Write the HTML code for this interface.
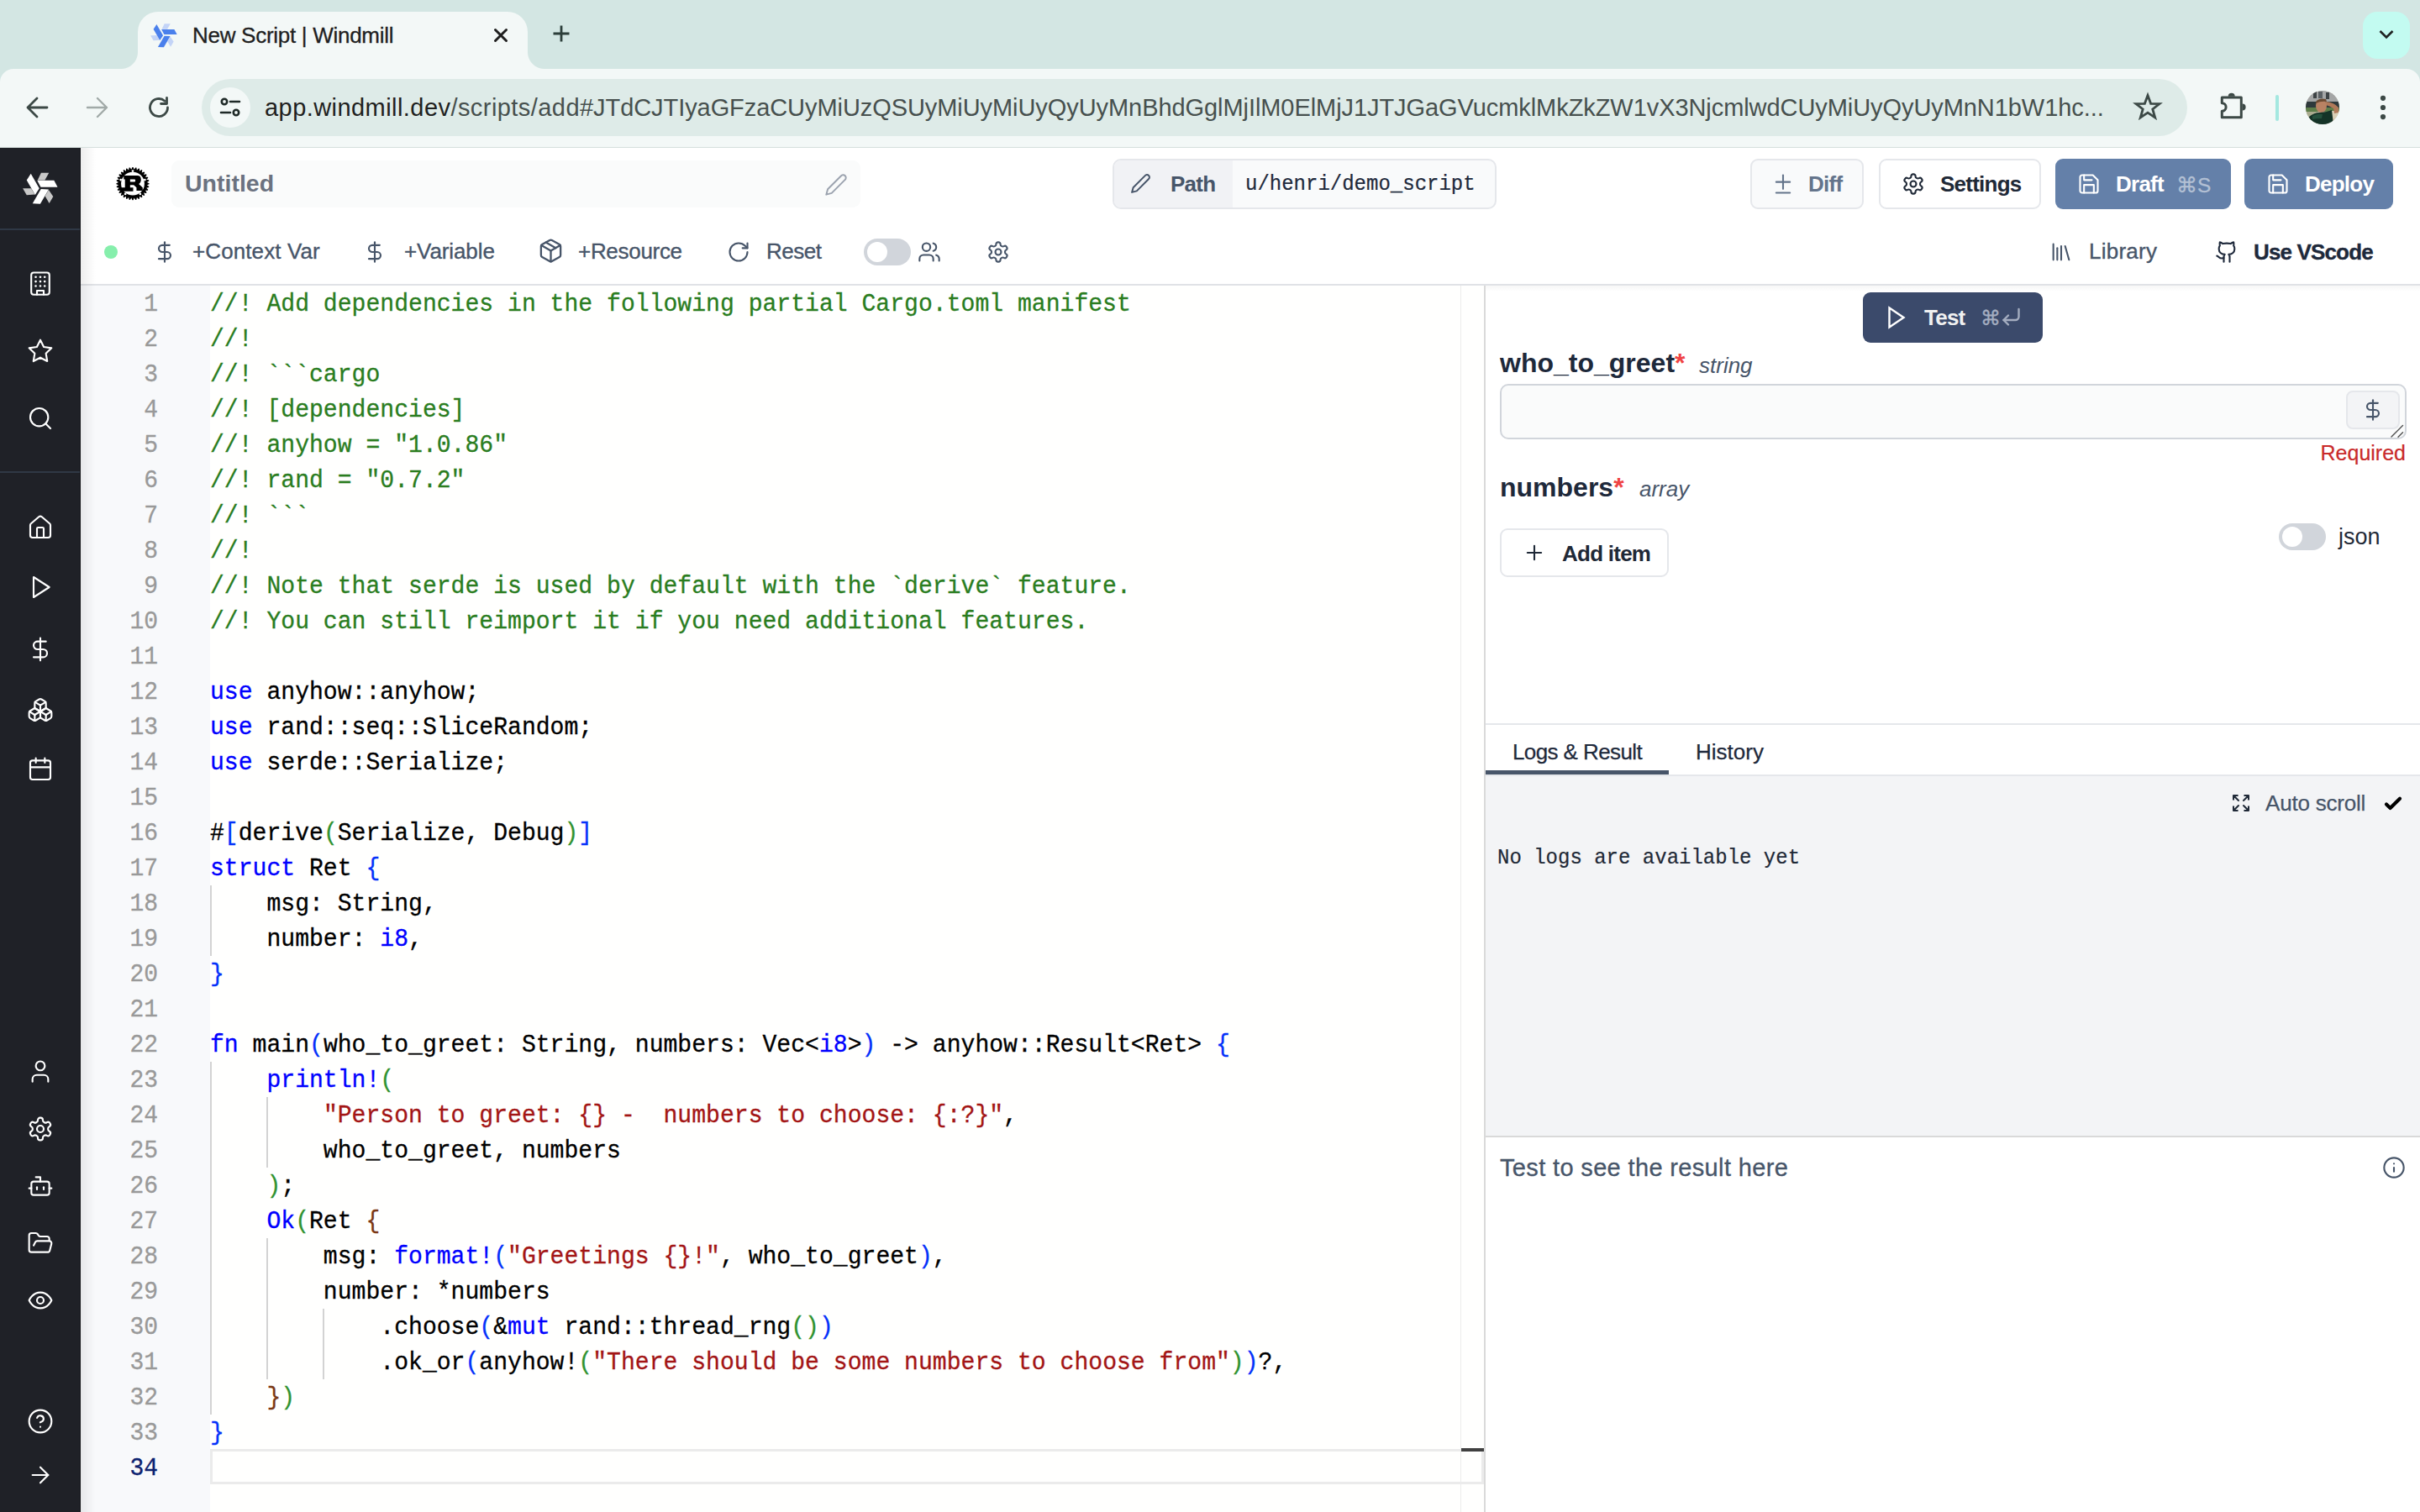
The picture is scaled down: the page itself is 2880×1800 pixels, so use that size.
<!DOCTYPE html>
<html><head><meta charset="utf-8">
<style>
*{box-sizing:border-box;margin:0;padding:0}
html,body{width:2880px;height:1800px;overflow:hidden;background:#fff;font-family:"Liberation Sans",sans-serif}
.a{position:absolute}
svg{display:block;overflow:visible}
.ic{fill:none;stroke:currentColor;stroke-width:2;stroke-linecap:round;stroke-linejoin:round}
.mono{font-family:"Liberation Mono",monospace}
/* chrome */
#tabstrip{left:0;top:0;width:2880px;height:130px;background:#d3e6e3}
#tab{left:164px;top:14px;width:464px;height:70px;background:#f3f8f7;border-radius:24px 24px 0 0}
#tabfl{left:144px;top:62px;width:20px;height:20px;background:radial-gradient(circle at 0 0,#d3e6e3 19.5px,#f3f8f7 20.5px)}
#tabfr{left:628px;top:62px;width:20px;height:20px;background:radial-gradient(circle at 100% 0,#d3e6e3 19.5px,#f3f8f7 20.5px)}
#toolbar{left:0;top:82px;width:2880px;height:93px;background:#f3f8f7;border-radius:16px 16px 0 0}
#tbline{left:0;top:175px;width:2880px;height:1px;background:#d5dfdd}
#omni{left:240px;top:94px;width:2363px;height:68px;background:#deebe8;border-radius:34px}
#siteinfo{left:250px;top:104px;width:48px;height:48px;border-radius:24px;background:#f3f8f7}
#url{left:315px;top:112px;font-size:29px;color:#47504e;white-space:nowrap;letter-spacing:-0.07px}
#url i{font-style:normal;letter-spacing:0.44px}
#url b{font-weight:normal;color:#1f2120}
#tabtitle{left:229px;top:27px;font-size:26px;letter-spacing:-0.28px;-webkit-text-stroke:0.3px #1f1f1f;color:#1f1f1f;white-space:nowrap}
#ddbtn{left:2812px;top:14px;width:56px;height:56px;border-radius:17px;background:#c3fbf1}
/* app */
#side{left:0;top:176px;width:96px;height:1624px;background:#1f2127}
.sdiv{left:0;width:96px;height:2px;background:#2f3845}
.sic{left:33px;width:30px;height:30px;color:#fff}

/* header */
.btn{position:absolute;border-radius:9px;display:flex;align-items:center;white-space:nowrap}
.tb{position:absolute;display:flex;align-items:center;color:#475569;font-size:26px;letter-spacing:-0.3px;-webkit-text-stroke:0.35px currentColor;white-space:nowrap}
#editor{left:96px;top:340px;width:1671px;height:1460px;background:#fffffe}
#gutter{left:96px;top:340px;width:154px;height:1460px;background:#f8f9fb}
.ln{position:absolute;left:96px;width:92px;text-align:right;font-family:"Liberation Mono",monospace;font-size:28px;color:#999;line-height:42px;height:42px;transform:scaleY(1.055);transform-origin:0 28.5px;-webkit-text-stroke:0.3px currentColor}
.cl{position:absolute;left:250px;font-family:"Liberation Mono",monospace;font-size:28.1px;color:#000;line-height:42px;height:42px;white-space:pre;transform:scaleY(1.055);transform-origin:0 28.5px;-webkit-text-stroke:0.3px currentColor}
.cl span{-webkit-text-stroke:0.3px currentColor}
.cm{color:#2a7d1f}.kw{color:#0000ff}.st{color:#a31515}.b1{color:#0431fa}.b2{color:#319331}.b3{color:#7b3814}
.ln.act{color:#0b216f}
.ig{position:absolute;width:2px;background:#d3d3d3}
</style></head><body>
<div id="tabstrip" class="a"></div>
<div id="toolbar" class="a"></div>
<div id="tab" class="a"></div>
<div id="tabfl" class="a"></div>
<div id="tabfr" class="a"></div>
<div id="omni" class="a"></div>
<div id="siteinfo" class="a"></div>
<div id="tbline" class="a"></div>

<!-- favicon -->
<svg class="a" style="left:179px;top:26px;width:32px;height:32px" viewBox="-450 -450 900 900">
 <g id="wm">
  <polygon points="-70,-205 20,-390 220,-390 115,-205" fill="#c3d4f7"/>
  <polygon points="-80,-200 350,-200 440,-25 10,-25" fill="#4a80ec"/>
 </g>
 <use href="#wm" transform="rotate(120)"/>
 <use href="#wm" transform="rotate(240)"/>
</svg>
<div id="tabtitle" class="a">New Script | Windmill</div>
<svg class="a ic" style="left:588px;top:34px;width:16px;height:16px;color:#1f1f1f;stroke-width:3" viewBox="0 0 16 16"><path d="M1.5 1.5L14.5 14.5M14.5 1.5L1.5 14.5"/></svg>
<svg class="a" style="left:657px;top:29px;width:22px;height:22px" viewBox="0 0 22 22"><path d="M11 1.5v19M1.5 11h19" stroke="#2c3e3a" stroke-width="2.8"/></svg>
<div id="ddbtn" class="a"></div>
<svg class="a" style="left:2830px;top:34px;width:20px;height:14px" viewBox="0 0 20 14"><path d="M2.5 3l7.5 7.5L17.5 3" fill="none" stroke="#1f2322" stroke-width="2.6"/></svg>

<!-- toolbar icons -->
<svg class="a ic" style="left:30px;top:114px;width:28px;height:28px;color:#3c4946;stroke-width:2.8" viewBox="0 0 28 28"><path d="M26 14H3M14 3L3 14l11 11"/></svg>
<svg class="a ic" style="left:102px;top:114px;width:28px;height:28px;color:#a1aaa8;stroke-width:2.4" viewBox="0 0 28 28"><path d="M2 14h23M14 3l11 11-11 11"/></svg>
<svg class="a ic" style="left:175px;top:114px;width:28px;height:28px;color:#3c4946;stroke-width:2.8" viewBox="0 0 28 28"><path d="M24.5 14A10.5 10.5 0 1 1 21 6.2"/><path d="M23.5 2.5v7h-7" /></svg>
<svg class="a ic" style="left:261px;top:115px;width:26px;height:26px;color:#1f2a28;stroke-width:2.6" viewBox="0 0 26 26"><circle cx="6" cy="6" r="3.2"/><path d="M13 6h11M2 19h11"/><circle cx="20" cy="19" r="3.2"/></svg>
<div id="url" class="a"><i><b>app.windmill.dev</b>/scripts/add</i>#JTdCJTIyaGFzaCUyMiUzQSUyMiUyMiUyQyUyMnBhdGglMjIlM0ElMjJ1JTJGaGVucmklMkZkZW1vX3NjcmlwdCUyMiUyQyUyMnN1bW1hc...</div>
<svg class="a" style="left:2539px;top:110px;width:34px;height:33px" viewBox="0 0 34 33"><polygon points="17,3.5 20.6,13.3 31,13.6 22.8,20 25.7,30 17,24.2 8.3,30 11.2,20 3,13.6 13.4,13.3" fill="none" stroke="#3c4946" stroke-width="2.8" stroke-linejoin="miter"/></svg>
<svg class="a" style="left:2636px;top:104px;width:44px;height:44px" viewBox="0 0 44 44"><path d="M8.3 12.1H31.3V35.8H8.3V28.3A4.8 4.8 0 0 0 8.3 18.7Z" fill="none" stroke="#3c4946" stroke-width="3" stroke-linejoin="round"/><path d="M15.7 10.8A4 4 0 0 1 23.7 10.8Z" fill="#3c4946"/><path d="M32.6 19.5A4 4 0 0 1 32.6 27.5Z" fill="#3c4946"/></svg>
<div class="a" style="left:2708px;top:113px;width:4px;height:31px;border-radius:2px;background:#a4e8e0"></div>
<svg class="a" style="left:2744px;top:108px;width:40px;height:40px" viewBox="0 0 40 40">
 <defs><clipPath id="avc"><circle cx="20" cy="20" r="20"/></clipPath></defs>
 <g clip-path="url(#avc)">
  <rect width="40" height="40" fill="#b9b6a8"/>
  <rect x="0" y="0" width="40" height="13" fill="#a4a6a6"/>
  <rect x="9" y="1" width="4" height="8" fill="#3e4446"/><rect x="15" y="1" width="5" height="8" fill="#5a6064"/><rect x="24" y="2" width="4" height="8" fill="#3e4446"/>
  <rect x="0" y="13" width="40" height="9" fill="#2f3a3c"/>
  <rect x="0" y="20" width="40" height="5" fill="#5e7e4a"/>
  <rect x="0" y="25" width="14" height="15" fill="#a9ab8f"/>
  <rect x="28" y="24" width="12" height="16" fill="#d9cfb6"/>
  <path d="M24 13 Q34 14 39 20 L39 26 L34 27 L33 21 Q28 18 24 17Z" fill="#b07a5a"/>
  <ellipse cx="18.5" cy="18" rx="6.5" ry="8" fill="#b98263"/>
  <path d="M12 13 Q16 8 24 10 L25 13 Q18 12 12 15Z" fill="#6b4a32"/>
  <path d="M3 40 L4 31 Q10 26 17 26 Q24 26 31 23 L33 40Z" fill="#143327"/>
  <path d="M8 30 Q14 27 20 28 L19 33 Q12 33 8 34Z" fill="#24503c"/>
 </g>
</svg>
<svg class="a" style="left:2830px;top:110px;width:12px;height:36px" viewBox="0 0 12 36"><circle cx="6" cy="6.8" r="3.1" fill="#3c4946"/><circle cx="6" cy="18" r="3.1" fill="#3c4946"/><circle cx="6" cy="29.1" r="3.1" fill="#3c4946"/></svg>

<!-- sidebar -->
<div id="side" class="a"></div>
<svg class="a" style="left:27px;top:203px;width:42px;height:42px" viewBox="-450 -450 900 900">
 <g id="wm2">
  <polygon points="-70,-205 20,-390 220,-390 115,-205" fill="#c8c8c8"/>
  <polygon points="-80,-200 350,-200 440,-25 10,-25" fill="#fff"/>
 </g>
 <use href="#wm2" transform="rotate(120)"/>
 <use href="#wm2" transform="rotate(240)"/>
</svg>
<div class="a sdiv" style="top:272px"></div>
<div class="a sdiv" style="top:561px"></div>

<!-- app header row 1 -->
<svg class="a" style="left:137px;top:199px;width:42px;height:42px" viewBox="0 0 42 42">
 <polygon points="19.33,2.78 20.45,0.11 21.55,0.11 22.67,2.78 24.29,0.38 25.36,0.59 25.93,3.43 27.99,1.39 29.00,1.81 29.01,4.71 31.43,3.11 32.34,3.71 31.78,6.56 34.47,5.46 35.24,6.23 34.14,8.92 36.99,8.36 37.59,9.27 35.99,11.69 38.89,11.70 39.31,12.71 37.27,14.77 40.11,15.34 40.32,16.41 37.92,18.03 40.59,19.15 40.59,20.25 37.92,21.37 40.32,22.99 40.11,24.06 37.27,24.63 39.31,26.69 38.89,27.70 35.99,27.71 37.59,30.13 36.99,31.04 34.14,30.48 35.24,33.17 34.47,33.94 31.78,32.84 32.34,35.69 31.43,36.29 29.01,34.69 29.00,37.59 27.99,38.01 25.93,35.97 25.36,38.81 24.29,39.02 22.67,36.62 21.55,39.29 20.45,39.29 19.33,36.62 17.71,39.02 16.64,38.81 16.07,35.97 14.01,38.01 13.00,37.59 12.99,34.69 10.57,36.29 9.66,35.69 10.22,32.84 7.53,33.94 6.76,33.17 7.86,30.48 5.01,31.04 4.41,30.13 6.01,27.71 3.11,27.70 2.69,26.69 4.73,24.63 1.89,24.06 1.68,22.99 4.08,21.37 1.41,20.25 1.41,19.15 4.08,18.03 1.68,16.41 1.89,15.34 4.73,14.77 2.69,12.71 3.11,11.70 6.01,11.69 4.41,9.27 5.01,8.36 7.86,8.92 6.76,6.23 7.53,5.46 10.22,6.56 9.66,3.71 10.57,3.11 12.99,4.71 13.00,1.81 14.01,1.39 16.07,3.43 16.64,0.59 17.71,0.38" fill="#000"/>
 <circle cx="21" cy="19.7" r="13.9" fill="#fff"/>
 <circle cx="21.00" cy="4.60" r="1.35" fill="#fff"/><circle cx="35.36" cy="15.03" r="1.35" fill="#fff"/><circle cx="29.88" cy="31.92" r="1.35" fill="#fff"/><circle cx="12.12" cy="31.92" r="1.35" fill="#fff"/><circle cx="6.64" cy="15.03" r="1.35" fill="#fff"/>
 <path fill="#000" fill-rule="evenodd" d="M10.24 10.10 L26.80 10.10 C30.20 10.10 30.90 13.20 30.80 15.10 C30.70 17.50 29.80 19.30 28.10 19.90 L32.75 24.17 L32.75 28.10 L25.47 28.10 L25.47 24.17 L22.16 21.20 L17.85 21.20 L17.85 24.17 L21.50 24.17 L21.50 28.64 L7.60 28.64 L7.60 24.17 L11.73 24.17 L11.73 14.57 L10.24 14.57 Z M17.85 14.57 L23.30 14.57 C24.40 14.57 24.40 17.55 23.30 17.55 L17.85 17.55 Z"/>
</svg>
<div class="a" style="left:204px;top:191px;width:820px;height:56px;border-radius:9px;background:#fafbfb"></div>
<div class="a" style="left:220px;top:202px;font-size:28.5px;font-weight:bold;color:#6b7280">Untitled</div>
<svg class="a ic" style="left:981px;top:206px;width:28px;height:28px;color:#9ca3af;stroke-width:1.7" viewBox="0 0 24 24"><path d="M17 3a2.85 2.83 0 1 1 4 4L7.5 20.5 2 22l1.5-5.5Z"/></svg>

<div class="a" style="left:1324px;top:189px;width:457px;height:60px;border:2px solid #e5e7eb;border-radius:10px;background:#f9fafb;overflow:hidden">
 <div class="a" style="left:0;top:0;width:141px;height:56px;background:#f1f2f5"></div>
</div>
<svg class="a ic" style="left:1345px;top:206px;width:25px;height:25px;color:#475569;stroke-width:1.9" viewBox="0 0 24 24"><path d="M17 3a2.85 2.83 0 1 1 4 4L7.5 20.5 2 22l1.5-5.5Z"/></svg>
<div class="a" style="left:1393px;top:204px;font-size:26px;font-weight:bold;letter-spacing:-0.75px;color:#475569">Path</div>
<div class="a mono" style="left:1482px;top:205px;font-size:24px;line-height:30px;color:#1e293b;transform:scaleY(1.1);transform-origin:0 22px;-webkit-text-stroke:0.2px currentColor">u/henri/demo_script</div>

<div class="btn" style="left:2083px;top:189px;width:135px;height:60px;border:2px solid #e5e7eb;background:#f9fafb"></div>
<svg class="a ic" style="left:2108px;top:205px;width:28px;height:28px;color:#64748b;stroke-width:1.8" viewBox="0 0 24 24"><path d="M12 3v14"/><path d="M5 10h14"/><path d="M5 21h14"/></svg>
<div class="a" style="left:2152px;top:204px;font-size:26px;font-weight:bold;letter-spacing:-0.75px;color:#64748b">Diff</div>

<div class="btn" style="left:2236px;top:189px;width:193px;height:60px;border:2px solid #e5e7eb;background:#fff"></div>
<svg class="a ic" style="left:2263px;top:205px;width:28px;height:28px;color:#1f2937;stroke-width:1.8" viewBox="0 0 24 24"><path d="M12.22 2h-.44a2 2 0 0 0-2 2v.18a2 2 0 0 1-1 1.730l-.43.25a2 2 0 0 1-2 0l-.15-.08a2 2 0 0 0-2.73.73l-.22.38a2 2 0 0 0 .73 2.73l.15.1a2 2 0 0 1 1 1.72v.51a2 2 0 0 1-1 1.74l-.15.09a2 2 0 0 0-.73 2.73l.22.38a2 2 0 0 0 2.73.73l.15-.08a2 2 0 0 1 2 0l.43.25a2 2 0 0 1 1 1.73V20a2 2 0 0 0 2 2h.44a2 2 0 0 0 2-2v-.18a2 2 0 0 1 1-1.73l.43-.25a2 2 0 0 1 2 0l.15.08a2 2 0 0 0 2.73-.73l.22-.39a2 2 0 0 0-.73-2.73l-.15-.08a2 2 0 0 1-1-1.74v-.5a2 2 0 0 1 1-1.74l.15-.09a2 2 0 0 0 .73-2.73l-.22-.38a2 2 0 0 0-2.73-.73l-.15.08a2 2 0 0 1-2 0l-.43-.25a2 2 0 0 1-1-1.73V4a2 2 0 0 0-2-2z"/><circle cx="12" cy="12" r="3"/></svg>
<div class="a" style="left:2309px;top:204px;font-size:26px;font-weight:bold;letter-spacing:-0.75px;color:#1f2937">Settings</div>

<div class="btn" style="left:2446px;top:189px;width:209px;height:60px;background:#6480a9"></div>
<svg class="a ic" style="left:2472px;top:205px;width:28px;height:28px;color:#fff;stroke-width:1.8" viewBox="0 0 24 24"><path d="M19 21H5a2 2 0 0 1-2-2V5a2 2 0 0 1 2-2h11l5 5v11a2 2 0 0 1-2 2z"/><polyline points="17 21 17 13 7 13 7 21"/><polyline points="7 3 7 8 15 8"/></svg>
<div class="a" style="left:2518px;top:204px;font-size:26px;font-weight:bold;letter-spacing:-0.75px;color:#fff">Draft</div>
<div class="a" style="left:2590px;top:206px;font-size:24.5px;color:#b3c0d4;-webkit-text-stroke:0.3px #b3c0d4">&#8984;S</div>

<div class="btn" style="left:2671px;top:189px;width:177px;height:60px;background:#6480a9"></div>
<svg class="a ic" style="left:2697px;top:205px;width:28px;height:28px;color:#fff;stroke-width:1.8" viewBox="0 0 24 24"><path d="M19 21H5a2 2 0 0 1-2-2V5a2 2 0 0 1 2-2h11l5 5v11a2 2 0 0 1-2 2z"/><polyline points="17 21 17 13 7 13 7 21"/><polyline points="7 3 7 8 15 8"/></svg>
<div class="a" style="left:2743px;top:204px;font-size:26px;font-weight:bold;letter-spacing:-0.75px;color:#fff">Deploy</div>

<!-- header row 2 -->
<div class="a" style="left:124px;top:292px;width:16px;height:16px;border-radius:50%;background:#86efac"></div>
<svg class="a ic" style="left:182px;top:285px;width:28px;height:30px;color:#475569;stroke-width:1.8" viewBox="0 0 24 24"><line x1="12" x2="12" y1="2" y2="22"/><path d="M17 5H9.5a3.5 3.5 0 0 0 0 7h5a3.5 3.5 0 0 1 0 7H6"/></svg>
<div class="a tb" style="left:229px;top:284px;letter-spacing:0.1px">+Context Var</div>
<svg class="a ic" style="left:432px;top:285px;width:28px;height:30px;color:#475569;stroke-width:1.8" viewBox="0 0 24 24"><line x1="12" x2="12" y1="2" y2="22"/><path d="M17 5H9.5a3.5 3.5 0 0 0 0 7h5a3.5 3.5 0 0 1 0 7H6"/></svg>
<div class="a tb" style="left:481px;top:284px;letter-spacing:-0.1px">+Variable</div>
<svg class="a ic" style="left:640px;top:283px;width:31px;height:31px;color:#475569;stroke-width:1.8" viewBox="0 0 24 24"><path d="m7.5 4.27 9 5.15"/><path d="M21 8a2 2 0 0 0-1-1.73l-7-4a2 2 0 0 0-2 0l-7 4A2 2 0 0 0 3 8v8a2 2 0 0 0 1 1.73l7 4a2 2 0 0 0 2 0l7-4A2 2 0 0 0 21 16Z"/><path d="m3.3 7 8.7 5 8.7-5"/><path d="M12 22V12"/></svg>
<div class="a tb" style="left:688px;top:284px">+Resource</div>
<svg class="a ic" style="left:865px;top:286px;width:28px;height:28px;color:#475569;stroke-width:1.8" viewBox="0 0 24 24"><path d="M21 12a9 9 0 1 1-9-9c2.52 0 4.93 1 6.74 2.74L21 8"/><path d="M21 3v5h-5"/></svg>
<div class="a tb" style="left:912px;top:284px;letter-spacing:-0.5px">Reset</div>
<div class="a" style="left:1028px;top:284px;width:56px;height:32px;border-radius:16px;background:#d1d5db"></div>
<div class="a" style="left:1032px;top:288px;width:24px;height:24px;border-radius:50%;background:#fff"></div>
<svg class="a ic" style="left:1092px;top:286px;width:28px;height:28px;color:#475569;stroke-width:1.8" viewBox="0 0 24 24"><path d="M16 21v-2a4 4 0 0 0-4-4H6a4 4 0 0 0-4 4v2"/><circle cx="9" cy="7" r="4"/><path d="M22 21v-2a4 4 0 0 0-3-3.87"/><path d="M16 3.13a4 4 0 0 1 0 7.75"/></svg>
<svg class="a ic" style="left:1174px;top:286px;width:28px;height:28px;color:#475569;stroke-width:1.8" viewBox="0 0 24 24"><path d="M12.22 2h-.44a2 2 0 0 0-2 2v.18a2 2 0 0 1-1 1.73l-.43.25a2 2 0 0 1-2 0l-.15-.08a2 2 0 0 0-2.73.73l-.22.38a2 2 0 0 0 .73 2.73l.15.1a2 2 0 0 1 1 1.72v.51a2 2 0 0 1-1 1.74l-.15.09a2 2 0 0 0-.73 2.73l.22.38a2 2 0 0 0 2.73.73l.15-.08a2 2 0 0 1 2 0l.43.25a2 2 0 0 1 1 1.73V20a2 2 0 0 0 2 2h.44a2 2 0 0 0 2-2v-.18a2 2 0 0 1 1-1.73l.43-.25a2 2 0 0 1 2 0l.15.08a2 2 0 0 0 2.73-.73l.22-.39a2 2 0 0 0-.73-2.73l-.15-.08a2 2 0 0 1-1-1.74v-.5a2 2 0 0 1 1-1.74l.15-.09a2 2 0 0 0 .73-2.73l-.22-.38a2 2 0 0 0-2.73-.73l-.15.08a2 2 0 0 1-2 0l-.43-.25a2 2 0 0 1-1-1.73V4a2 2 0 0 0-2-2z"/><circle cx="12" cy="12" r="3"/></svg>
<svg class="a ic" style="left:2439px;top:286px;width:28px;height:28px;color:#475569;stroke-width:1.8" viewBox="0 0 24 24"><path d="m16 6 4 14"/><path d="M12 6v14"/><path d="M8 8v12"/><path d="M4 4v16"/></svg>
<div class="a tb" style="left:2486px;top:284px;letter-spacing:0.25px">Library</div>
<svg class="a ic" style="left:2636px;top:286px;width:28px;height:28px;color:#1e293b;stroke-width:1.8" viewBox="0 0 24 24"><path d="M15 22v-4a4.8 4.8 0 0 0-1-3.5c3 0 6-2 6-5.5.08-1.25-.27-2.48-1-3.5.28-1.15.28-2.35 0-3.5 0 0-1 0-3 1.5-2.64-.5-5.36-.5-8 0C6 2 5 2 5 2c-.3 1.15-.3 2.35 0 3.5A5.403 5.403 0 0 0 4 9c0 3.5 3 5.5 6 5.5-.39.49-.68 1.05-.85 1.65-.17.6-.22 1.23-.15 1.85v4"/><path d="M9 18c-4.51 2-5-2-7-2"/></svg>
<div class="a tb" style="left:2682px;top:285px;font-size:26px;font-weight:bold;letter-spacing:-0.85px;color:#1e293b">Use VScode</div>
<div class="a" style="left:96px;top:338px;width:2784px;height:2px;background:#e0e2e6"></div>

<!-- editor -->
<div id="editor" class="a"></div>
<div id="gutter" class="a"></div>
<!-- sidebar icons -->
<svg class="a ic" style="left:32px;top:322px;width:32px;height:32px;color:#fff;stroke-width:1.6" viewBox="0 0 24 24"><rect width="16.2" height="19.7" x="3.9" y="1.9" rx="2.2"/><path d="M9 21.6v-3.6h6v3.6"/><path stroke-width="2" d="M7.9 5.8h.01M12 5.8h.01M15.9 5.8h.01M7.9 9.8h.01M12 9.8h.01M15.9 9.8h.01M7.9 13.9h.01M12 13.9h.01M15.9 13.9h.01"/></svg>
<svg class="a ic" style="left:32px;top:402px;width:32px;height:32px;color:#fff;stroke-width:1.6" viewBox="0 0 24 24"><polygon points="12 2 15.09 8.26 22 9.27 17 14.14 18.18 21.02 12 17.77 5.82 21.02 7 14.14 2 9.27 8.91 8.26 12 2"/></svg>
<svg class="a ic" style="left:32px;top:482px;width:32px;height:32px;color:#fff;stroke-width:1.6" viewBox="0 0 24 24"><circle cx="11" cy="11" r="8"/><path d="m21 21-4.3-4.3"/></svg>
<svg class="a ic" style="left:32px;top:612px;width:32px;height:32px;color:#fff;stroke-width:1.6" viewBox="0 0 24 24"><path d="M15 21v-8a1 1 0 0 0-1-1h-4a1 1 0 0 0-1 1v8"/><path d="M3 10a2 2 0 0 1 .709-1.528l7-5.999a2 2 0 0 1 2.582 0l7 5.999A2 2 0 0 1 21 10v9a2 2 0 0 1-2 2H5a2 2 0 0 1-2-2z"/></svg>
<svg class="a ic" style="left:32px;top:683px;width:32px;height:32px;color:#fff;stroke-width:1.6" viewBox="0 0 24 24"><polygon points="6 3 20 12 6 21 6 3"/></svg>
<svg class="a ic" style="left:32px;top:757px;width:32px;height:32px;color:#fff;stroke-width:1.6" viewBox="0 0 24 24"><line x1="12" x2="12" y1="2" y2="22"/><path d="M17 5H9.5a3.5 3.5 0 0 0 0 7h5a3.5 3.5 0 0 1 0 7H6"/></svg>
<svg class="a ic" style="left:32px;top:829px;width:32px;height:32px;color:#fff;stroke-width:1.6" viewBox="0 0 24 24"><path d="M2.97 12.92A2 2 0 0 0 2 14.63v3.24a2 2 0 0 0 .97 1.71l3 1.8a2 2 0 0 0 2.06 0L12 19v-5.5l-5-3-4.03 2.42Z"/><path d="m7 16.5-4.740-2.85"/><path d="m7 16.5 5-3"/><path d="M7 16.5v5.17"/><path d="M12 13.5V19l3.97 2.38a2 2 0 0 0 2.06 0l3-1.8a2 2 0 0 0 .97-1.71v-3.24a2 2 0 0 0-.97-1.71L17 10.5l-5 3Z"/><path d="m17 16.5-5-3"/><path d="m17 16.5 4.74-2.85"/><path d="M17 16.5v5.17"/><path d="M7.97 4.42A2 2 0 0 0 7 6.13v4.37l5 3 5-3V6.13a2 2 0 0 0-.97-1.710l-3-1.8a2 2 0 0 0-2.06 0l-3 1.8Z"/><path d="M12 8 7.26 5.15"/><path d="m12 8 4.74-2.85"/><path d="M12 13.5V8"/></svg>
<svg class="a ic" style="left:32px;top:900px;width:32px;height:32px;color:#fff;stroke-width:1.6" viewBox="0 0 24 24"><rect width="18" height="17" x="3" y="4" rx="2"/><path d="M8 2v4M16 2v4M3 10h18"/></svg>
<svg class="a ic" style="left:32px;top:1259px;width:32px;height:32px;color:#fff;stroke-width:1.6" viewBox="0 0 24 24"><circle cx="12" cy="7.4" r="4"/><path d="M19 21.6v-2.2a3.8 3.8 0 0 0-3.8-3.8H8.8a3.8 3.8 0 0 0-3.8 3.8v2.2"/></svg>
<svg class="a ic" style="left:32px;top:1328px;width:32px;height:32px;color:#fff;stroke-width:1.6" viewBox="0 0 24 24"><path d="M12.22 2h-.44a2 2 0 0 0-2 2v.18a2 2 0 0 1-1 1.73l-.43.25a2 2 0 0 1-2 0l-.15-.08a2 2 0 0 0-2.730.73l-.22.38a2 2 0 0 0 .73 2.73l.15.1a2 2 0 0 1 1 1.72v.51a2 2 0 0 1-1 1.74l-.15.09a2 2 0 0 0-.73 2.73l.22.38a2 2 0 0 0 2.73.73l.15-.08a2 2 0 0 1 2 0l.43.25a2 2 0 0 1 1 1.73V20a2 2 0 0 0 2 2h.44a2 2 0 0 0 2-2v-.18a2 2 0 0 1 1-1.73l.43-.25a2 2 0 0 1 2 0l.15.08a2 2 0 0 0 2.73-.73l.22-.39a2 2 0 0 0-.73-2.73l-.15-.08a2 2 0 0 1-1-1.74v-.5a2 2 0 0 1 1-1.74l.15-.09a2 2 0 0 0 .73-2.73l-.22-.38a2 2 0 0 0-2.73-.73l-.15.08a2 2 0 0 1-2 0l-.43-.25a2 2 0 0 1-1-1.73V4a2 2 0 0 0-2-2z"/><circle cx="12" cy="12" r="3"/></svg>
<svg class="a ic" style="left:32px;top:1396px;width:32px;height:32px;color:#fff;stroke-width:1.6" viewBox="0 0 24 24"><path d="M12 8V4H8"/><rect width="16" height="12" x="4" y="8" rx="2"/><path d="M2 14h2"/><path d="M20 14h2"/><path d="M15 13v2"/><path d="M9 13v2"/></svg>
<svg class="a ic" style="left:32px;top:1464px;width:32px;height:32px;color:#fff;stroke-width:1.6" viewBox="0 0 24 24"><path d="m6 14 1.5-2.9A2 2 0 0 1 9.24 10H20a2 2 0 0 1 1.94 2.5l-1.54 6a2 2 0 0 1-1.95 1.5H4a2 2 0 0 1-2-2V5a2 2 0 0 1 2-2h3.9a2 2 0 0 1 1.69.9l.81 1.2a2 2 0 0 0 1.67.9H18a2 2 0 0 1 2 2v2"/></svg>
<svg class="a ic" style="left:32px;top:1532px;width:32px;height:32px;color:#fff;stroke-width:1.6" viewBox="0 0 24 24"><path d="M2 12s3-7 10-7 10 7 10 7-3 7-10 7-10-7-10-7Z"/><circle cx="12" cy="12" r="3"/></svg>
<svg class="a ic" style="left:32px;top:1676px;width:32px;height:32px;color:#fff;stroke-width:1.6" viewBox="0 0 24 24"><circle cx="12" cy="12" r="10"/><path d="M9.09 9a3 3 0 0 1 5.83 1c0 2-3 3-3 3"/><path d="M12 17h.01"/></svg>
<svg class="a ic" style="left:32px;top:1740px;width:32px;height:32px;color:#fff;stroke-width:1.6" viewBox="0 0 24 24"><path d="M5 12h14"/><path d="m12 5 7 7-7 7"/></svg>

<!-- right panel -->
<div class="a" style="left:1738px;top:340px;width:1px;height:1460px;background:#ececec"></div>
<div class="a" style="left:1766px;top:340px;width:3px;height:1460px;background:#dadada"></div>
<div class="a" style="left:1768px;top:340px;width:1112px;height:1460px;background:#fff"></div>
<div class="a" style="left:1768px;top:340px;width:1112px;height:7px;background:linear-gradient(180deg,rgba(0,0,0,0.035),rgba(0,0,0,0))"></div>
<div class="btn" style="left:2217px;top:348px;width:214px;height:60px;background:#3b4a6b"></div>
<svg class="a" style="left:2246px;top:364px;width:24px;height:28px" viewBox="0 0 24 28"><polygon points="2.5 2.5 19.5 14 2.5 25.5" fill="none" stroke="#fff" stroke-width="2.4" stroke-linejoin="miter"/></svg>
<div class="a" style="left:2290px;top:363px;font-size:26px;font-weight:bold;letter-spacing:-0.75px;color:#f0f0f0">Test</div>
<div class="a" style="left:2357px;top:365px;font-size:24px;color:#a4adc0;-webkit-text-stroke:0.4px #a4adc0">&#8984;</div>
<svg class="a ic" style="left:2382px;top:366px;width:23px;height:23px;color:#a4adc0;stroke-width:2.4" viewBox="0 0 23 23"><path d="M20.5 2v9a4 4 0 0 1-4 4H2.5"/><path d="M8 9.5 2.5 15 8 20.5"/></svg>

<div class="a" style="left:1785px;top:414px;font-size:32px;font-weight:bold;color:#1e293b">who_to_greet<span style="color:#ef4444">*</span></div>
<div class="a" style="left:2022px;top:420px;font-size:26px;font-style:italic;color:#475569">string</div>
<div class="a" style="left:1785px;top:457px;width:1079px;height:66px;border:2px solid #d1d5db;border-radius:10px;background:#fafbfb"></div>
<div class="a" style="left:2792px;top:465px;width:64px;height:46px;border:2px solid #e5e7eb;border-radius:8px;background:#f3f4f6"></div>
<svg class="a ic" style="left:2810px;top:474px;width:28px;height:28px;color:#475569;stroke-width:1.8" viewBox="0 0 24 24"><line x1="12" x2="12" y1="2" y2="22"/><path d="M17 5H9.5a3.5 3.5 0 0 0 0 7h5a3.5 3.5 0 0 1 0 7H6"/></svg>
<svg class="a" style="left:2845px;top:505px;width:16px;height:16px" viewBox="0 0 16 16"><path d="M1 15L14.5 1.5M9 15.3L14.5 9.8" stroke="#505050" stroke-width="1.4" stroke-linecap="round"/></svg>
<div class="a" style="left:2700px;top:525px;width:163px;text-align:right;font-size:25px;color:#c92a2a;-webkit-text-stroke:0.2px #c92a2a">Required</div>

<div class="a" style="left:1785px;top:562px;font-size:32px;font-weight:bold;color:#1e293b">numbers<span style="color:#ef4444">*</span></div>
<div class="a" style="left:1951px;top:567px;font-size:26px;font-style:italic;color:#475569">array</div>
<div class="btn" style="left:1785px;top:629px;width:201px;height:58px;border:2px solid #e5e7eb;background:#fff"></div>
<svg class="a ic" style="left:1812px;top:644px;width:28px;height:28px;color:#1f2937;stroke-width:1.8" viewBox="0 0 24 24"><path d="M5 12h14"/><path d="M12 5v14"/></svg>
<div class="a" style="left:1859px;top:644px;font-size:26px;font-weight:bold;letter-spacing:-0.75px;color:#1f2937">Add item</div>
<div class="a" style="left:2712px;top:623px;width:56px;height:32px;border-radius:16px;background:#d1d5db"></div>
<div class="a" style="left:2716px;top:627px;width:24px;height:24px;border-radius:50%;background:#fff"></div>
<div class="a" style="left:2783px;top:624px;font-size:27px;color:#1f2937">json</div>

<!-- logs -->
<div class="a" style="left:1768px;top:861px;width:1112px;height:2px;background:#e5e7eb"></div>
<div class="a" style="left:1800px;top:880px;font-size:26px;letter-spacing:-0.6px;-webkit-text-stroke:0.25px #1e293b;color:#1e293b">Logs &amp; Result</div>
<div class="a" style="left:2018px;top:880px;font-size:26px;-webkit-text-stroke:0.25px #1e293b;color:#1e293b">History</div>
<div class="a" style="left:1768px;top:922px;width:1112px;height:2px;background:#e5e7eb"></div>
<div class="a" style="left:1768px;top:917px;width:218px;height:5px;background:#475569"></div>
<div class="a" style="left:1768px;top:924px;width:1112px;height:428px;background:#f3f4f6"></div>
<div class="a" style="left:1768px;top:1352px;width:1112px;height:2px;background:#d9d9d9"></div>
<svg class="a ic" style="left:2655px;top:944px;width:24px;height:24px;color:#1f2937;stroke-width:2" viewBox="0 0 24 24"><path d="m21 21-6-6m6 6v-4.8m0 4.8h-4.8"/><path d="M3 16.2V21m0 0h4.8M3 21l6-6"/><path d="M21 7.8V3m0 0h-4.8M21 3l-6 6"/><path d="M3 7.8V3m0 0h4.8M3 3l6 6"/></svg>
<div class="a" style="left:2696px;top:941px;font-size:26px;letter-spacing:-0.2px;-webkit-text-stroke:0.25px #475569;color:#475569">Auto scroll</div>
<svg class="a" style="left:2836px;top:946px;width:24px;height:20px" viewBox="0 0 24 20"><path d="M4 11.5L8.6 16L20 4.8" fill="none" stroke="#000" stroke-width="4.2" stroke-linecap="round" stroke-linejoin="round"/></svg>
<div class="a mono" style="left:1782px;top:1007px;font-size:24px;line-height:30px;color:#1f2937;transform:scaleY(1.1);transform-origin:0 22px;-webkit-text-stroke:0.2px currentColor">No logs are available yet</div>
<div class="a" style="left:1785px;top:1374px;font-size:29px;letter-spacing:0.35px;-webkit-text-stroke:0.3px #475569;color:#475569">Test to see the result here</div>
<svg class="a ic" style="left:2835px;top:1376px;width:28px;height:28px;color:#475569;stroke-width:1.8" viewBox="0 0 24 24"><circle cx="12" cy="12" r="10"/><path d="M12 16v-4"/><path d="M12 8h.01"/></svg>
<!-- code -->
<div class="ln" style="top:341.5px">1</div>
<div class="cl" style="top:341.5px"><span class="cm">//! Add dependencies in the following partial Cargo.toml manifest</span></div>
<div class="ln" style="top:383.5px">2</div>
<div class="cl" style="top:383.5px"><span class="cm">//!</span></div>
<div class="ln" style="top:425.5px">3</div>
<div class="cl" style="top:425.5px"><span class="cm">//! ```cargo</span></div>
<div class="ln" style="top:467.5px">4</div>
<div class="cl" style="top:467.5px"><span class="cm">//! [dependencies]</span></div>
<div class="ln" style="top:509.5px">5</div>
<div class="cl" style="top:509.5px"><span class="cm">//! anyhow = "1.0.86"</span></div>
<div class="ln" style="top:551.5px">6</div>
<div class="cl" style="top:551.5px"><span class="cm">//! rand = "0.7.2"</span></div>
<div class="ln" style="top:593.5px">7</div>
<div class="cl" style="top:593.5px"><span class="cm">//! ```</span></div>
<div class="ln" style="top:635.5px">8</div>
<div class="cl" style="top:635.5px"><span class="cm">//!</span></div>
<div class="ln" style="top:677.5px">9</div>
<div class="cl" style="top:677.5px"><span class="cm">//! Note that serde is used by default with the `derive` feature.</span></div>
<div class="ln" style="top:719.5px">10</div>
<div class="cl" style="top:719.5px"><span class="cm">//! You can still reimport it if you need additional features.</span></div>
<div class="ln" style="top:761.5px">11</div>
<div class="ln" style="top:803.5px">12</div>
<div class="cl" style="top:803.5px"><span class="kw">use</span> anyhow::anyhow;</div>
<div class="ln" style="top:845.5px">13</div>
<div class="cl" style="top:845.5px"><span class="kw">use</span> rand::seq::SliceRandom;</div>
<div class="ln" style="top:887.5px">14</div>
<div class="cl" style="top:887.5px"><span class="kw">use</span> serde::Serialize;</div>
<div class="ln" style="top:929.5px">15</div>
<div class="ln" style="top:971.5px">16</div>
<div class="cl" style="top:971.5px">#<span class="b1">[</span>derive<span class="b2">(</span>Serialize, Debug<span class="b2">)</span><span class="b1">]</span></div>
<div class="ln" style="top:1013.5px">17</div>
<div class="cl" style="top:1013.5px"><span class="kw">struct</span> Ret <span class="b1">{</span></div>
<div class="ln" style="top:1055.5px">18</div>
<div class="cl" style="top:1055.5px">    msg: String,</div>
<div class="ln" style="top:1097.5px">19</div>
<div class="cl" style="top:1097.5px">    number: <span class="kw">i8</span>,</div>
<div class="ln" style="top:1139.5px">20</div>
<div class="cl" style="top:1139.5px"><span class="b1">}</span></div>
<div class="ln" style="top:1181.5px">21</div>
<div class="ln" style="top:1223.5px">22</div>
<div class="cl" style="top:1223.5px"><span class="kw">fn</span> main<span class="b1">(</span>who_to_greet: String, numbers: Vec&lt;<span class="kw">i8</span>&gt;<span class="b1">)</span> -&gt; anyhow::Result&lt;Ret&gt; <span class="b1">{</span></div>
<div class="ln" style="top:1265.5px">23</div>
<div class="cl" style="top:1265.5px">    <span class="kw">println!</span><span class="b2">(</span></div>
<div class="ln" style="top:1307.5px">24</div>
<div class="cl" style="top:1307.5px">        <span class="st">"Person to greet: {} -  numbers to choose: {:?}"</span>,</div>
<div class="ln" style="top:1349.5px">25</div>
<div class="cl" style="top:1349.5px">        who_to_greet, numbers</div>
<div class="ln" style="top:1391.5px">26</div>
<div class="cl" style="top:1391.5px">    <span class="b2">)</span>;</div>
<div class="ln" style="top:1433.5px">27</div>
<div class="cl" style="top:1433.5px">    <span class="kw">Ok</span><span class="b2">(</span>Ret <span class="b3">{</span></div>
<div class="ln" style="top:1475.5px">28</div>
<div class="cl" style="top:1475.5px">        msg: <span class="kw">format!</span><span class="b1">(</span><span class="st">"Greetings {}!"</span>, who_to_greet<span class="b1">)</span>,</div>
<div class="ln" style="top:1517.5px">29</div>
<div class="cl" style="top:1517.5px">        number: *numbers</div>
<div class="ln" style="top:1559.5px">30</div>
<div class="cl" style="top:1559.5px">            .choose<span class="b1">(</span>&amp;<span class="kw">mut</span> rand::thread_rng<span class="b2">()</span><span class="b1">)</span></div>
<div class="ln" style="top:1601.5px">31</div>
<div class="cl" style="top:1601.5px">            .ok_or<span class="b1">(</span>anyhow!<span class="b2">(</span><span class="st">"There should be some numbers to choose from"</span><span class="b2">)</span><span class="b1">)</span>?,</div>
<div class="ln" style="top:1643.5px">32</div>
<div class="cl" style="top:1643.5px">    <span class="b3">}</span><span class="b2">)</span></div>
<div class="ln" style="top:1685.5px">33</div>
<div class="cl" style="top:1685.5px"><span class="b1">}</span></div>
<div class="ln act" style="top:1727.5px">34</div>
<div class="ig" style="left:250px;top:1054px;height:84px"></div>
<div class="ig" style="left:250px;top:1264px;height:420px"></div>
<div class="ig" style="left:317px;top:1306px;height:84px"></div>
<div class="ig" style="left:317px;top:1474px;height:168px"></div>
<div class="ig" style="left:384px;top:1558px;height:84px"></div>
<div class="a" style="left:250px;top:1725px;width:1516px;height:42px;border:3px solid #ebebeb"></div>
<div class="a" style="left:1739px;top:1724px;width:27px;height:4px;background:#404040"></div>
<div class="a" style="left:96px;top:176px;width:18px;height:1624px;background:linear-gradient(90deg,rgba(0,0,0,0.07),rgba(0,0,0,0))"></div>
<div class="a" style="left:95px;top:176px;width:1px;height:1624px;background:#121317"></div>
</body></html>
